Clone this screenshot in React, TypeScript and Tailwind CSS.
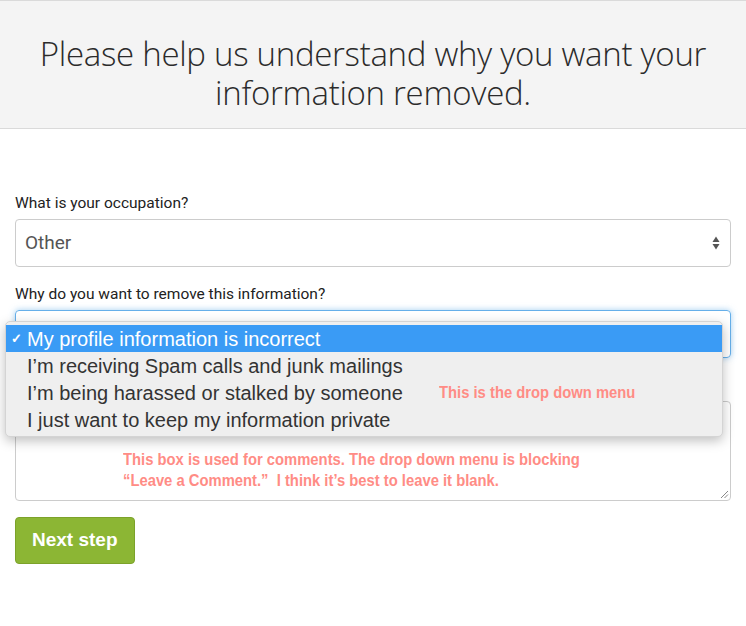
import React from 'react';

const SelectArrows: React.FC = () => (
    <svg width="8" height="14" viewBox="0 0 8 14" className="absolute right-[10px] top-1/2 -translate-y-1/2">
        <path d="M4 0.5 L7.5 6 L0.5 6 Z" fill="#555" />
        <path d="M4 13.5 L7.5 8 L0.5 8 Z" fill="#555" />
    </svg>
);

const options = [
    "My profile information is incorrect",
    "I’m receiving Spam calls and junk mailings",
    "I’m being harassed or stalked by someone",
    "I just want to keep my information private",
];

const App: React.FC = () => {
    return (
        <div className="w-[746px] h-[626px] bg-white overflow-hidden font-['Roboto',sans-serif]">
            <div className="h-[129px] bg-[#f4f4f4] border-t border-b border-[#dadada] pt-[33px] text-center">
                <h1 className="font-['Open_Sans',sans-serif] font-light text-[33px] leading-[39px] text-[#2b2b2b] tracking-[-0.3px]">
                    Please help us understand why you want your<br />information removed.
                </h1>
            </div>

            <div className="relative flex flex-col px-[15px] pt-[64px]">
                <label className="text-[15.5px] leading-[20px] text-[#222] mb-[6px]">What is your occupation?</label>
                <div className="relative h-[48px] border border-[#cccccc] rounded-[4px] flex items-center pl-[9px]">
                    <span className="text-[19px] text-[#555]">Other</span>
                    <SelectArrows />
                </div>

                <label className="text-[15.5px] leading-[20px] text-[#222] mt-[17px] mb-[6px]">Why do you want to remove this information?</label>
                <div className="relative h-[48px] border border-[#66afe9] rounded-[4px] shadow-[0_0_6px_rgba(102,175,233,0.6)]">
                    <SelectArrows />
                </div>

                <div className="relative h-[100px] mt-[43px] border border-[#cccccc] rounded-[4px]">
                    <div className="absolute left-[107px] top-[47px] origin-left scale-x-[0.87] whitespace-nowrap font-['Liberation_Sans',sans-serif] font-bold text-[17px] leading-[21px] text-[#ff8c85]">
                        <p>This box is used for comments. The drop down menu is blocking</p>
                        <p>“Leave a Comment.”&nbsp; I think it’s best to leave it blank.</p>
                    </div>
                    <svg width="9" height="9" viewBox="0 0 9 9" className="absolute right-[1px] bottom-[1px]">
                        <path d="M8 1 L1 8 M8 4.5 L4.5 8" stroke="#888" strokeWidth="1" />
                    </svg>
                </div>

                <button className="self-start mt-[16px] h-[47px] px-[16px] bg-[#8cb634] border border-[#7ca22a] rounded-[4px] text-white font-['Liberation_Sans',sans-serif] font-bold text-[19px]">
                    Next step
                </button>

                {/* open native dropdown */}
                <div className="absolute left-[5px] top-[192px] w-[718px] py-[3px] bg-[#efefef] rounded-[5px] border border-[#d4d4d4] shadow-[0_4px_12px_rgba(0,0,0,0.25)] font-['Liberation_Sans',sans-serif] text-[20px]">
                    {options.map((opt, i) => (
                        <div key={i} className={`relative h-[27px] flex items-center pl-[21px] ${i === 0 ? 'bg-[#3a9bf5] text-white' : 'text-[#333]'}`}>
                            {i === 0 && <span className="absolute left-[5px] text-[13px] font-bold">✓</span>}
                            {opt}
                            {i === 2 && (
                                <span className="absolute left-[433px] origin-left scale-x-[0.87] whitespace-nowrap font-bold text-[17px] text-[#ff8c85]">This is the drop down menu</span>
                            )}
                        </div>
                    ))}
                </div>
            </div>
        </div>
    );
};

export default App;
